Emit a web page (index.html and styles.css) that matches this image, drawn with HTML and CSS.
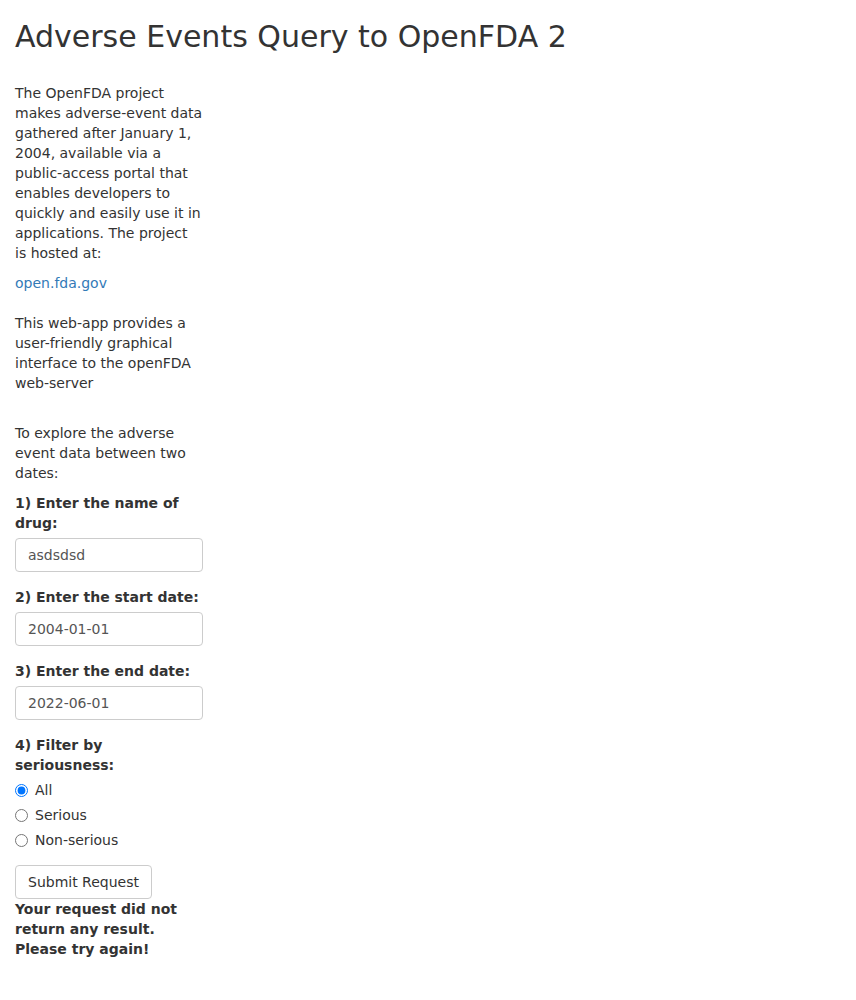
FILE: index.html
```html
<!DOCTYPE html>
<html lang="en">
<head>
<meta charset="utf-8">
<title>Adverse Events Query to OpenFDA 2</title>
<link rel="stylesheet" href="styles.css">
</head>
<body>
<div class="page">
  <h2 class="title">Adverse Events Query to OpenFDA 2</h2>
  <div class="sidebar">
    <p class="text">The OpenFDA project makes adverse-event data gathered after January 1, 2004, available via a public-access portal that enables developers to quickly and easily use it in applications. The project is hosted at:</p>
    <p class="text"><a class="link" href="#">open.fda.gov</a></p>
    <p class="text gap-top">This web-app provides a user-friendly graphical interface to the openFDA web-server</p>
    <p class="text gap-top-lg">To explore the adverse event data between two dates:</p>

    <div class="form-group">
      <label class="control-label" for="drug">1) Enter the name of drug:</label>
      <input class="form-control" id="drug" type="text" value="asdsdsd">
    </div>
    <div class="form-group">
      <label class="control-label" for="start">2) Enter the start date:</label>
      <input class="form-control" id="start" type="text" value="2004-01-01">
    </div>
    <div class="form-group">
      <label class="control-label" for="end">3) Enter the end date:</label>
      <input class="form-control" id="end" type="text" value="2022-06-01">
    </div>
    <div class="form-group">
      <label class="control-label">4) Filter by seriousness:</label>
      <div class="options">
        <label class="radio"><input type="radio" name="ser" checked><span>All</span></label>
        <label class="radio"><input type="radio" name="ser"><span>Serious</span></label>
        <label class="radio"><input type="radio" name="ser"><span>Non-serious</span></label>
      </div>
    </div>
    <button class="btn" type="button">Submit Request</button>
    <div class="result">Your request did not return any result. Please try again!</div>
  </div>
</div>
</body>
</html>
```
FILE: styles.css
```css
html, body {
  margin: 0;
  padding: 0;
  background: #fff;
}
body {
  font-family: "DejaVu Sans", sans-serif;
  font-size: 14px;
  line-height: 20px;
  color: #333;
}
.page {
  padding: 0 15px;
}
.title {
  font-size: 30px;
  line-height: 33px;
  font-weight: normal;
  margin: 20px 0 10px;
  color: #333;
}
.sidebar {
  width: 188px;
  padding-top: 20px;
}
.text {
  margin: 0 0 10px;
}
.gap-top {
  margin-top: 20px;
}
.gap-top-lg {
  margin-top: 30px;
}
.link {
  color: #337ab7;
  text-decoration: none;
}
.form-group {
  margin-bottom: 15px;
}
.control-label {
  display: block;
  font-weight: bold;
  margin-bottom: 5px;
}
.form-control {
  display: block;
  box-sizing: border-box;
  width: 100%;
  height: 34px;
  padding: 6px 12px;
  border: 1px solid #ccc;
  border-radius: 4px;
  font-family: inherit;
  font-size: 14px;
  line-height: 20px;
  color: #555;
  background: #fff;
  margin: 0;
}
.options {
  display: flex;
  flex-direction: column;
  gap: 5px;
}
.radio {
  display: flex;
  align-items: center;
  gap: 7px;
  height: 20px;
}
.radio input {
  margin: 0;
  width: 13px;
  height: 13px;
}
.btn {
  display: block;
  font-family: inherit;
  font-size: 14px;
  line-height: 20px;
  padding: 6px 12px;
  border: 1px solid #ccc;
  border-radius: 4px;
  background: #fff;
  color: #333;
  margin: 0;
}
.result {
  font-weight: bold;
}
```
